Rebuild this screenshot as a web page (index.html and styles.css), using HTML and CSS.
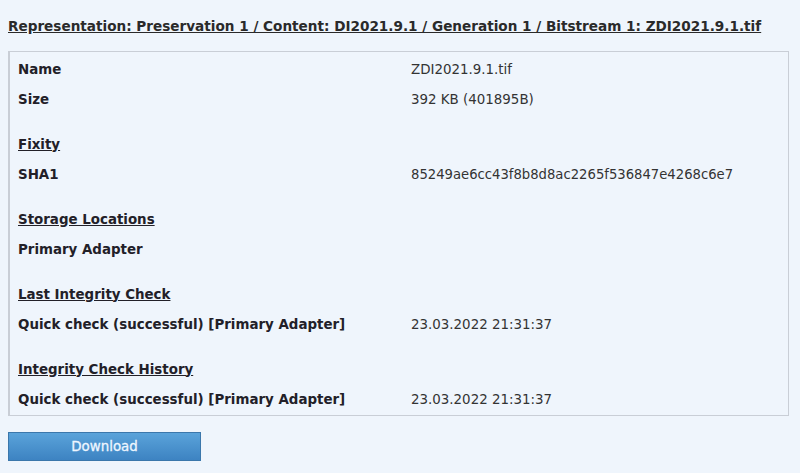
FILE: index.html
```html
<!DOCTYPE html>
<html>
<head>
<meta charset="utf-8">
<link rel="stylesheet" href="styles.css">
</head>
<body>
<div class="page">
  <h2 class="title">Representation: Preservation 1 / Content: DI2021.9.1 / Generation 1 / Bitstream 1: ZDI2021.9.1.tif</h2>
  <div class="box">
    <table class="info">
      <tr><th>Name</th><td>ZDI2021.9.1.tif</td></tr>
      <tr><th>Size</th><td>392 KB (401895B)</td></tr>
      <tr class="gap"><th></th><td></td></tr>
      <tr><th class="sec">Fixity</th><td></td></tr>
      <tr><th>SHA1</th><td class="hash">85249ae6cc43f8b8d8ac2265f536847e4268c6e7</td></tr>
      <tr class="gap"><th></th><td></td></tr>
      <tr><th class="sec">Storage Locations</th><td></td></tr>
      <tr><th>Primary Adapter</th><td></td></tr>
      <tr class="gap"><th></th><td></td></tr>
      <tr><th class="sec">Last Integrity Check</th><td></td></tr>
      <tr><th>Quick check (successful) [Primary Adapter]</th><td>23.03.2022 21:31:37</td></tr>
      <tr class="gap"><th></th><td></td></tr>
      <tr><th class="sec">Integrity Check History</th><td></td></tr>
      <tr><th>Quick check (successful) [Primary Adapter]</th><td>23.03.2022 21:31:37</td></tr>
    </table>
  </div>
  <button class="btn">Download</button>
</div>
</body>
</html>
```
FILE: styles.css
```css
html, body {
  margin: 0;
  padding: 0;
  background: #eff5fc;
}
body {
  font-family: "DejaVu Sans", Verdana, sans-serif;
  color: #222;
  width: 800px;
  height: 473px;
  overflow: hidden;
}
.page {
  padding: 16px 0 0 8px;
}
.title {
  margin: 0;
  font-size: 13.6px;
  font-weight: bold;
  text-decoration: underline;
  color: #2a2a2a;
  line-height: 20px;
}
.box {
  margin-top: 15px;
  width: 781px;
  height: 365px;
  border: 1px solid #c9ced6;
  border-left-width: 2px;
  box-sizing: border-box;
  padding: 2px 0 0 8px;
}
.info {
  border-collapse: collapse;
}
.info th {
  text-align: left;
  font-weight: bold;
  font-size: 13.4px;
  color: #222028;
  height: 30px;
  padding: 0;
  width: 393px;
  vertical-align: middle;
  white-space: nowrap;
}
.info td {
  font-size: 13.4px;
  color: #333;
  padding: 0;
  vertical-align: middle;
  white-space: nowrap;
}
.info td.hash {
  font-size: 13.2px;
}
.info tr.gap th, .info tr.gap td {
  height: 15px;
}
.sec {
  text-decoration: underline;
}
.btn {
  margin-top: 16px;
  width: 193px;
  height: 29px;
  border: 1px solid #3b77ab;
  background: linear-gradient(#5aa3da, #3d83c2);
  color: #eef6ff;
  font-family: "DejaVu Sans", Verdana, sans-serif;
  font-size: 13.4px;
  font-weight: normal;
  -webkit-text-stroke: 0.3px #eef6ff;
  padding: 0;
  display: block;
}
```
